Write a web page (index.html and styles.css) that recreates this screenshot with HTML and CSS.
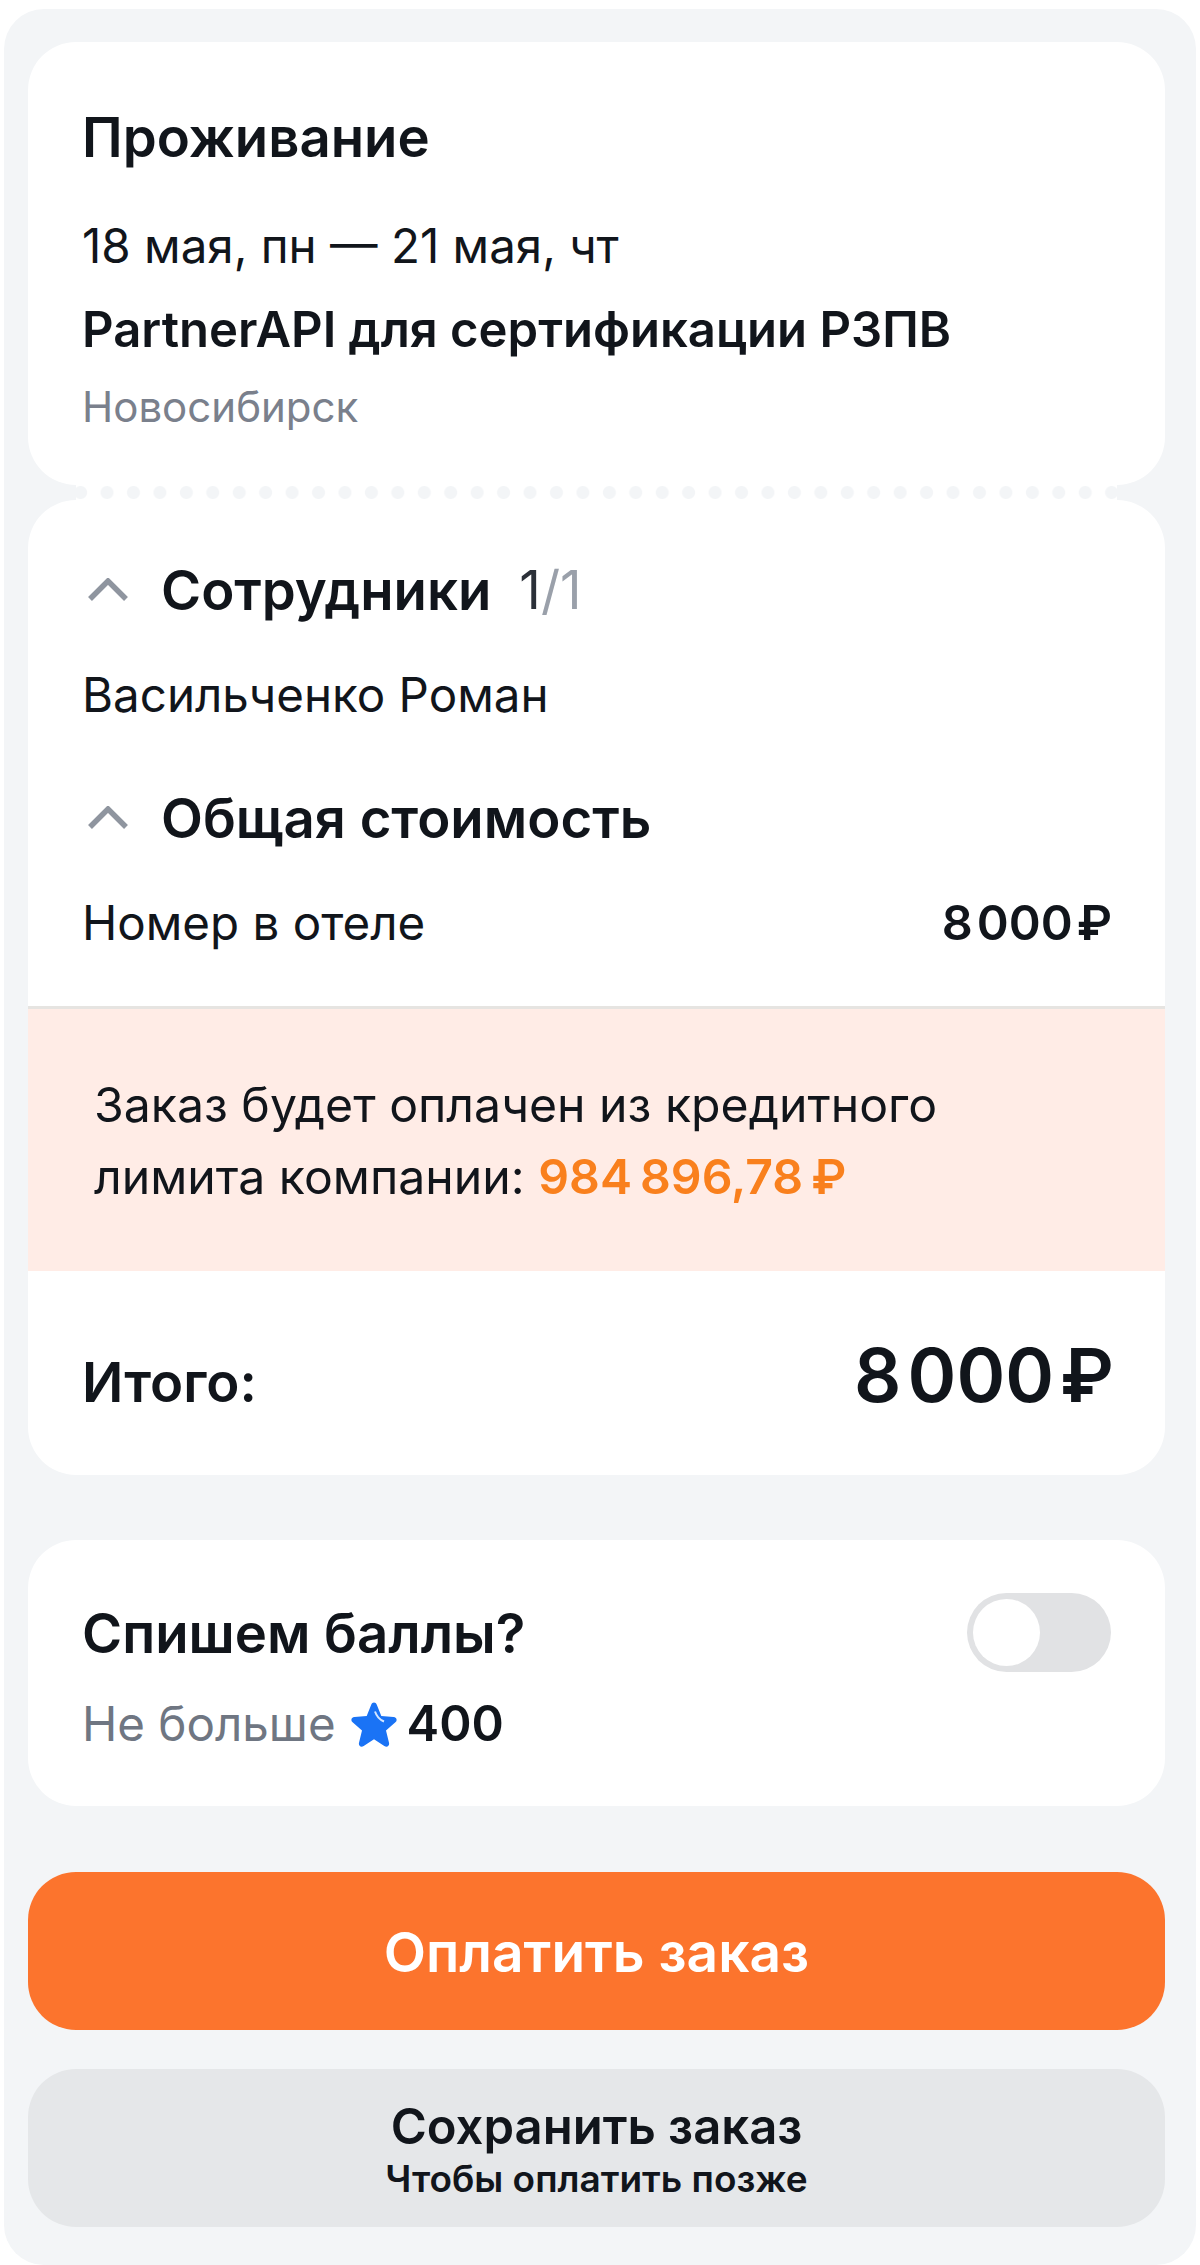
FILE: index.html
```html
<!DOCTYPE html>
<html lang="ru">
    <head>
        <meta charset="utf-8">
        <title>Оплата заказа</title>
        <link rel="stylesheet" href="styles.css">
    </head>
    <body>
        <div class="panel">
            <section class="card card-stay">
                <h2 class="title">Проживание</h2>
                <p class="dates">18 мая, пн — 21 мая, чт</p>
                <p class="hotel">PartnerAPI для сертификации РЗПВ</p>
                <p class="city">Новосибирск</p>
            </section>
            <div class="perforation"></div>
            <section class="card card-order">
                <div class="group-head">
                    <svg class="chevron" viewBox="0 0 40 24"><path d="M2 21 L20 3 L38 21"/></svg>
                    <h2 class="title">Сотрудники</h2>
                    <span class="count">1<span class="count-total">/1</span></span>
                </div>
                <p class="person">Васильченко Роман</p>
                <div class="group-head group-cost">
                    <svg class="chevron" viewBox="0 0 40 24"><path d="M2 21 L20 3 L38 21"/></svg>
                    <h2 class="title">Общая стоимость</h2>
                </div>
                <div class="price-row">
                    <span>Номер в отеле</span>
                    <span class="price">8&#8202;000&#8202;₽</span>
                </div>
                <div class="credit-note">
                    Заказ будет оплачен из кредитного<br>
                    лимита компании: <span class="credit-sum">984&#8201;896,78&#8201;₽</span>
                </div>
                <div class="total-row">
                    <span class="total-label">Итого:</span>
                    <span class="total-sum">8&#8202;000&#8202;₽</span>
                </div>
            </section>
            <section class="card card-points">
                <div class="points-text">
                    <h2 class="title">Спишем баллы?</h2>
                    <p class="points-limit">
                        Не больше
                        <svg class="star" viewBox="0 0 46 45"><path d="M23 0.500 C24.300 0.500 25.200 1.300 25.800 2.800 L30.300 14 L42.500 15 C45.600 15.300 46.700 18.300 44.400 20.300 L35 28.400 L38 40.800 C38.700 44 36 45.700 33.300 44 L23 37.300 L12.700 44 C10 45.700 7.300 44 8 40.800 L11 28.400 L1.600 20.300 C-0.700 18.300 0.400 15.300 3.500 15 L15.700 14 L20.200 2.800 C20.800 1.300 21.700 0.500 23 0.500 Z"/><path class="star-shine" d="M24 9.500 C25.500 14 28 17.500 33 19.500"/></svg>
                        <b>400</b>
                    </p>
                </div>
                <div class="toggle"><div class="knob"></div></div>
            </section>
            <button class="btn btn-pay">Оплатить заказ</button>
            <button class="btn btn-save">
                Сохранить заказ
                <small>Чтобы оплатить позже</small>
            </button>
        </div>
    </body>
</html>
```

FILE: styles.css
```css
* {
    box-sizing: border-box;
}
body {
    margin: 0;
    height: 2265px;
    overflow: hidden;
    background: #fff;
    font-family: Inter, "Noto Sans", sans-serif;
    color: #11151b;
}
h2, p {
    margin: 0;
    font-weight: 400;
}
.panel {
    margin: 9px 4px 0;
    padding: 33px 31px 0 24px;
    height: 2256px;
    border-radius: 40px;
    background: #f3f5f7;
}
.card {
    background: #fff;
    border-radius: 48px;
}
.title {
    font-size: 54.500px;
    line-height: 60px;
    font-weight: 600;
}
.card-stay {
    height: 443px;
    padding: 65px 54px 0;
}
.dates {
    margin-top: 51px;
    font-size: 47.500px;
    line-height: 56px;
}
.hotel {
    margin-top: 28px;
    font-size: 49px;
    line-height: 56px;
    font-weight: 600;
}
.city {
    margin-top: 24px;
    font-size: 42px;
    line-height: 50px;
    color: #7a808c;
}
.perforation {
    height: 15px;
    margin: 0 48px;
    background-color: #fff;
    background-image: radial-gradient(circle 7px at center, #f3f5f7 85%, transparent 100%);
    background-size: 26.45px 15px;
    background-position: 17.8px 0;
    background-repeat: repeat-x;
}
.card-order {
    height: 975px;
    padding-top: 60px;
    overflow: hidden;
}
.group-head {
    display: flex;
    align-items: center;
    padding: 0 54px;
    height: 60px;
}
.chevron {
    width: 40px;
    height: 24px;
    margin: 0 33px 0 6px;
    fill: none;
    stroke: #8f959f;
    stroke-width: 5.500;
}
.count {
    margin-left: 28px;
    font-size: 53px;
    color: #2b3038;
}
.count-total {
    color: #9aa0aa;
}
.person {
    margin-top: 47px;
    padding: 0 54px;
    font-size: 47.500px;
    line-height: 56px;
}
.group-cost {
    margin-top: 65px;
}
.price-row {
    display: flex;
    justify-content: space-between;
    align-items: center;
    margin-top: 47px;
    padding: 0 54px;
    font-size: 47.500px;
    line-height: 56px;
}
.price {
    margin-right: -1px;
    font-size: 48.500px;
    font-weight: 600;
}
.credit-note {
    margin-top: 55px;
    padding: 60px 66px 0;
    height: 265px;
    border-top: 3px solid #e6e4e1;
    background: #ffece6;
    font-size: 48.200px;
    line-height: 72px;
}
.credit-sum {
    color: #f9801d;
    font-weight: 600;
}
.total-row {
    display: flex;
    justify-content: space-between;
    align-items: baseline;
    padding: 60px 54px 0;
}
.total-label {
    font-size: 54.500px;
    font-weight: 600;
}
.total-sum {
    margin-right: -3px;
    font-size: 74px;
    line-height: 88px;
    font-weight: 600;
}
.card-points {
    display: flex;
    justify-content: space-between;
    margin-top: 65px;
    height: 266px;
    padding: 63px 54px 0;
}
.points-limit {
    display: flex;
    align-items: center;
    margin-top: 31px;
    font-size: 47.500px;
    line-height: 60px;
    color: #6f7682;
}
.points-limit b {
    color: #11151b;
    font-size: 49px;
    font-weight: 600;
}
.star {
    width: 46px;
    height: 45px;
    margin: 0 10px 0 15px;
    fill: #1a73f5;
}
.star-shine {
    fill: none;
    stroke: #d5e6ff;
    stroke-width: 2;
}
.toggle {
    width: 144px;
    height: 79px;
    margin-top: -10px;
    padding: 6px;
    border-radius: 40px;
    background: #e1e2e4;
}
.knob {
    width: 67px;
    height: 67px;
    border-radius: 50%;
    background: #fff;
}
.btn {
    display: block;
    width: 100%;
    height: 158px;
    padding-top: 2px;
    border: 0;
    border-radius: 48px;
    font-family: inherit;
    font-weight: 600;
    font-size: 55px;
    line-height: 60px;
}
.btn-pay {
    margin-top: 66px;
    background: #fc742d;
    color: #fff;
}
.btn-save {
    margin-top: 39px;
    background: #e5e7e9;
    color: #11151b;
    font-size: 49px;
}
.btn-save small {
    display: block;
    font-size: 37px;
    line-height: 44px;
    font-weight: 600;
}
```
